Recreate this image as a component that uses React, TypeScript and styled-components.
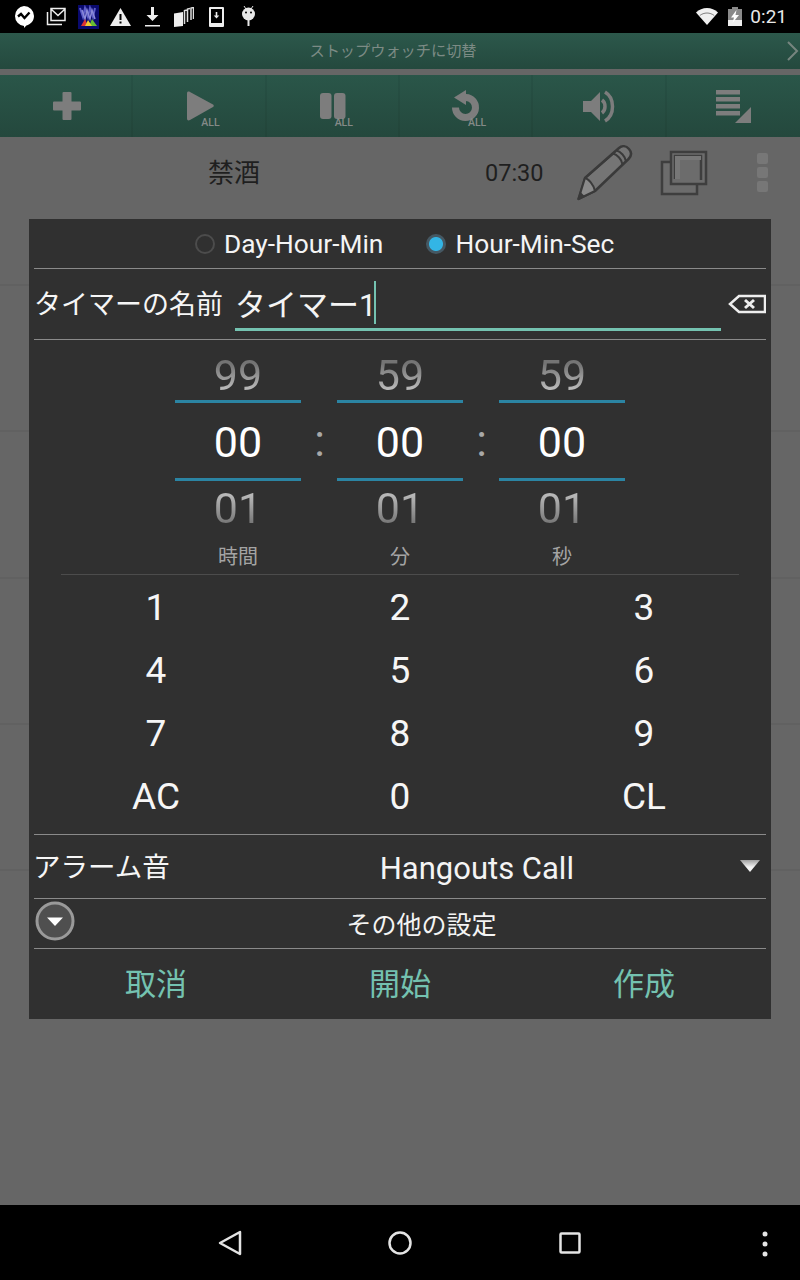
import { Fragment } from "react";
import styled, { createGlobalStyle } from "styled-components";

const GlobalStyle = createGlobalStyle`
  html, body {
    margin: 0;
    padding: 0;
    background: #000;
  }
  * {
    box-sizing: border-box;
  }
`;

const FONT = `Roboto, "Noto Sans CJK JP", sans-serif`;

const Screen = styled.div`
  position: relative;
  width: 800px;
  height: 1280px;
  display: flex;
  flex-direction: column;
  overflow: hidden;
  background: #666;
  font-family: ${FONT};
`;

const StatusBar = styled.div`
  height: 33px;
  flex: none;
  background: #000;
  display: flex;
  align-items: center;
  padding: 0 13px 0 8px;
`;

const StatusSlot = styled.div`
  width: 32px;
  height: 33px;
  display: flex;
  align-items: center;
  justify-content: center;
`;

const StatusRight = styled.div`
  margin-left: auto;
  display: flex;
  align-items: center;
  gap: 10px;
`;

const Clock = styled.span`
  margin-left: -2px;
  color: #e8e8e8;
  font-size: 19px;
  line-height: 33px;
`;

const SwitchBar = styled.div`
  position: relative;
  height: 36px;
  flex: none;
  display: flex;
  align-items: center;
  justify-content: center;
  background: linear-gradient(#2c584b, #24493e);
  color: #7c8b85;
  font-size: 15.2px;
  padding: 0 14px 4px 0;
  margin-bottom: 6px;
`;

const SwitchArrow = styled.svg`
  position: absolute;
  right: 0;
  top: 7px;
`;

const Toolbar = styled.div`
  height: 62px;
  flex: none;
  display: grid;
  grid-template-columns: repeat(6, 1fr);
  background: linear-gradient(#2a5649, #24483d);
`;

const ToolCell = styled.div`
  position: relative;
  display: flex;
  align-items: center;
  justify-content: center;
  box-shadow: inset -2px 0 0 rgba(0, 0, 0, 0.05);
  &:last-child {
    box-shadow: none;
  }
`;

const AllTag = styled.span<{ $left: number }>`
  position: absolute;
  left: ${({ $left }) => $left}px;
  top: 43px;
  color: #858a88;
  font-size: 10.5px;
  font-weight: 500;
  line-height: 10px;
`;

const List = styled.div`
  flex: 1;
  min-height: 0;
`;

const ListRow = styled.div<{ $height: number }>`
  height: ${({ $height }) => $height}px;
  border-bottom: 2px solid #616161;
  display: flex;
  align-items: flex-start;
`;

const RowName = styled.div`
  width: 194px;
  margin-left: 137px;
  height: 72px;
  line-height: 72px;
  text-align: center;
  font-size: 26px;
  color: #1f1f1f;
  flex: none;
`;

const RowTime = styled.div`
  width: 72px;
  margin-left: 154px;
  height: 72px;
  line-height: 72px;
  font-size: 23.5px;
  color: #1f1f1f;
  flex: none;
`;

const RowIcons = styled.div`
  display: flex;
  align-items: center;
  height: 72px;
  margin-left: 20px;
  flex: none;
`;

const CopyWrap = styled.div`
  margin: 0 48px 0 27px;
  display: flex;
`;

const Dialog = styled.div`
  position: absolute;
  left: 29px;
  top: 219px;
  width: 742px;
  height: 800px;
  background: #303030;
  padding: 0 5px;
  display: flex;
  flex-direction: column;
  color: #fff;
`;

const Section = styled.div<{ $height: number }>`
  height: ${({ $height }) => $height}px;
  flex: none;
  border-bottom: 1px solid #8a8a8a;
  display: flex;
  align-items: center;
`;

const RadioRow = styled(Section)`
  padding-left: 161px;
`;

const RadioDot = styled.span<{ $on?: boolean }>`
  width: 20px;
  height: 20px;
  border-radius: 50%;
  flex: none;
  border: ${({ $on }) => ($on ? "0" : "2px solid #4c4c4c")};
  background: ${({ $on }) =>
    $on ? "radial-gradient(circle, #33b5e5 6.5px, #455863 7.5px)" : "transparent"};
`;

const RadioLabel = styled.span<{ $gap: number }>`
  margin-left: 9px;
  margin-right: ${({ $gap }) => $gap}px;
  font-size: 26.3px;
  color: #f4f4f4;
`;

const FieldLabel = styled.span`
  font-size: 27px;
  color: #f6f6f6;
  margin-top: -3px;
`;

const AlarmLabel = styled(FieldLabel)`
  font-size: 27.5px;
  margin: -4px 0 0 -1px;
`;

const NameInput = styled.div`
  width: 486px;
  height: 53px;
  margin-left: 12px;
  border-bottom: 3px solid #74c2b0;
  display: flex;
  align-items: center;
  font-size: 31px;
  color: #f4f4f4;
`;

const Caret = styled.span`
  width: 2px;
  height: 43px;
  background: #74c2b0;
  margin-left: -2px;
`;

const ClearIcon = styled.svg`
  margin-left: 7px;
  flex: none;
`;

const Picker = styled.div`
  height: 234px;
  flex: none;
  display: flex;
  justify-content: center;
  padding-top: 14px;
`;

const PickerDivider = styled.div`
  height: 1px;
  flex: none;
  margin: 0 27px;
  background: #4c4c4c;
`;

const Wheel = styled.div`
  width: 126px;
  display: flex;
  flex-direction: column;
  align-items: stretch;
`;

const WheelFaded = styled.div<{ $direction: "up" | "down"; $height: number; $line: number }>`
  height: ${({ $height }) => $height}px;
  line-height: ${({ $line }) => $line}px;
  text-align: center;
  font-size: 43px;
  color: transparent;
  background: linear-gradient(
    ${({ $direction }) => ($direction === "up" ? "0deg" : "180deg")},
    #b8b8b8 25%,
    #747474 78%
  );
  -webkit-background-clip: text;
  background-clip: text;
`;

const WheelCurrent = styled.div`
  height: 81px;
  line-height: 79px;
  border-top: 3px solid #2b84a3;
  border-bottom: 3px solid #2b84a3;
  text-align: center;
  font-size: 43px;
  color: #fff;
`;

const WheelUnit = styled.div`
  margin-top: 7px;
  text-align: center;
  font-size: 20px;
  line-height: 26px;
  color: #a4a4a4;
`;

const ColonCell = styled.div`
  width: 36px;
  height: 81px;
  margin-top: 46px;
  line-height: 82px;
  text-align: center;
  font-size: 44px;
  color: #a8a8a8;
  padding-left: 1px;
`;

const Keypad = styled.div`
  flex: none;
  display: grid;
  grid-template-columns: repeat(3, 1fr);
  grid-auto-rows: 63px;
  height: 260px;
  padding-top: 1px;
  border-bottom: 1px solid #8a8a8a;
`;

const Key = styled.div`
  display: flex;
  align-items: center;
  justify-content: center;
  font-size: 37px;
  color: #f6f6f6;
`;

const AlarmValue = styled.div`
  flex: 1;
  text-align: center;
  font-size: 31px;
  color: #f4f4f4;
  padding: 3px 0 0 44px;
`;

const AlarmArrow = styled.svg`
  flex: none;
  margin: -2px 6px 0 0;
`;

const MoreLabel = styled.div`
  flex: 1;
  text-align: center;
  font-size: 25px;
  color: #f4f4f4;
  padding-bottom: 2px;
  padding-left: 2px;
`;

const MoreButton = styled.svg`
  flex: none;
  margin-top: -5px;
  margin-left: 1px;
`;

const Actions = styled.div`
  flex: 1;
  display: grid;
  grid-template-columns: repeat(3, 1fr);
  align-items: center;
`;

const ActionButton = styled.div`
  text-align: center;
  font-size: 31px;
  color: #74c2b0;
  padding-bottom: 6px;
`;

const NavBar = styled.div`
  height: 75px;
  flex: none;
  background: #000;
  position: relative;
  display: flex;
  align-items: center;
  justify-content: center;
`;

const NavSlot = styled.div`
  width: 170px;
  display: flex;
  justify-content: center;
`;

const NavMenu = styled.svg`
  position: absolute;
  right: 32px;
  top: 26px;
`;

const ICON = "#7d7d7d";

const BubbleIcon = () => (
  <svg width="22" height="23" viewBox="0 0 22 23">
    <path fill="#fff" d="M11 1a10 10 0 0 1 10 10c0 5-3.500 8.400-7.600 9.500L11 23v-2.100A10 10 0 0 1 11 1z" />
    <path fill="none" stroke="#000" strokeWidth="2.400" d="M5 11.500l3-2.500 3.500 4 5-5.500" />
  </svg>
);

const GalleryMailIcon = () => (
  <svg width="20" height="19" viewBox="0 0 20 19">
    <path fill="none" stroke="#eee" strokeWidth="1.500" d="M5 1.500h14v12H5zM5.500 2.500l6.500 6 6.500-6" />
    <path fill="none" stroke="#eee" strokeWidth="1.500" d="M1.500 5v12.500H16" />
  </svg>
);

const ColorAppIcon = () => (
  <svg width="21" height="24" viewBox="0 0 21 24">
    <rect width="21" height="24" fill="#0a0a6e" />
    <path fill="none" stroke="#5d5dc8" strokeWidth="2" d="M2 3l3 9 2-9 3 9 2-9 3 9 2-9" />
    <path fill="none" stroke="#8a8ad8" strokeWidth="1.500" d="M4 5l3 9 2-9 3 9 2-9 3 9" />
    <path fill="#d33" d="M3 21l4-7 3 7z" />
    <path fill="#6b3" d="M11 21l3-7 5 7z" />
    <path fill="#ec3" d="M7 21l3-6 4 6z" />
  </svg>
);

const WarningIcon = () => (
  <svg width="21" height="18" viewBox="0 0 21 18">
    <path fill="#eee" d="M10.500 0L21 18H0z" />
    <path fill="#000" d="M9.500 6h2v6h-2zM9.500 13.500h2v2h-2z" />
  </svg>
);

const DownloadIcon = () => (
  <svg width="15" height="20" viewBox="0 0 15 20">
    <path fill="#eee" d="M6 0h3v8h4.500l-6 6-6-6H6zM0 18h15v1.500H0z" />
  </svg>
);

const CardsIcon = () => (
  <svg width="20" height="20" viewBox="0 0 20 20">
    <path fill="#eee" d="M0 6.500L9 5v14l-9 1z" />
    <path fill="none" stroke="#ddd" strokeWidth="1.500" d="M10.500 17V3.500l2.500-.500M13.500 15V2l2.500-.500M17 13V1l2.500-.500v11.500" />
  </svg>
);

const PhoneSaveIcon = () => (
  <svg width="15" height="20" viewBox="0 0 15 20">
    <path fill="#eee" fillRule="evenodd" d="M1 0h13a1 1 0 0 1 1 1v18a1 1 0 0 1-1 1H1a1 1 0 0 1-1-1V1a1 1 0 0 1 1-1zM2 2v14h11V2z" />
    <path fill="#eee" d="M6.700 5h1.600v3.500h2L7.500 11.500 4.700 8.500h2z" />
  </svg>
);

const AndroidIcon = () => (
  <svg width="15" height="21" viewBox="0 0 15 21">
    <path stroke="#ddd" strokeWidth="1" d="M3 0l2 3M12 0l-2 3" />
    <circle cx="7.500" cy="8" r="6.500" fill="#e8e8e8" />
    <circle cx="5" cy="6.500" r="1" fill="#000" />
    <circle cx="10" cy="6.500" r="1" fill="#000" />
    <path fill="#e8e8e8" d="M6.500 14h2v6h-2z" />
  </svg>
);

const WifiIcon = () => (
  <svg width="22" height="17" viewBox="0 0 22 17">
    <path fill="#f0f0f0" d="M11 17L0 4.500C3 1.700 6.800 0 11 0s8 1.700 11 4.500z" />
    <path fill="none" stroke="#000" strokeWidth=".8" d="M3.800 7.500C5.800 6 8.300 5 11 5s5.200 1 7.200 2.500" opacity=".6" />
  </svg>
);

const BatteryIcon = () => (
  <svg width="14" height="19" viewBox="0 0 14 19">
    <path fill="#8a8a8a" d="M4 0h6v2h4v17H0V2h4z" />
    <path fill="#eee" d="M0 13h14v6H0z" />
    <path fill="#fff" d="M8.500 3L3 10.500h3L4.500 16 11 8H7.500z" />
  </svg>
);

const PlusIcon = () => (
  <svg width="30" height="30" viewBox="0 0 30 30">
    <path fill={ICON} d="M11.500 1h7a1 1 0 0 1 1 1v8.500H28a1 1 0 0 1 1 1v7a1 1 0 0 1-1 1h-8.500V28a1 1 0 0 1-1 1h-7a1 1 0 0 1-1-1v-8.500H2a1 1 0 0 1-1-1v-7a1 1 0 0 1 1-1h8.500V2a1 1 0 0 1 1-1z" />
  </svg>
);

const PlayIcon = () => (
  <svg width="28" height="30" viewBox="0 0 28 30">
    <path fill={ICON} d="M1 2.500C1 .500 2.500 0 4 1l23 12.500c1 .6 1 2 0 2.600L4 29c-1.500 1-3 .5-3-1.500z" />
  </svg>
);

const PauseIcon = () => (
  <svg width="26" height="26" viewBox="0 0 26 26">
    <rect x="0" y="0" width="11.500" height="26" rx="3" fill={ICON} />
    <rect x="14" y="0" width="11.500" height="26" rx="3" fill={ICON} />
  </svg>
);

const ReloadIcon = () => (
  <svg width="30" height="32" viewBox="0 0 30 32">
    <path fill="none" stroke={ICON} strokeWidth="7" d="M10 7.500h4a10 10 0 1 1-10.500 10" />
    <path fill={ICON} d="M14 0v15L2 7.500z" />
  </svg>
);

const SpeakerIcon = () => (
  <svg width="34" height="33" viewBox="0 0 34 33">
    <path fill={ICON} d="M0 11h8l9-9v29l-9-9H0z" />
    <path fill="none" stroke={ICON} strokeWidth="3.500" d="M19 10c4 3 4 10 0 13" />
    <path fill="none" stroke={ICON} strokeWidth="3.500" d="M22 2c10 6 10 23 0 29" />
  </svg>
);

const QueueIcon = () => (
  <svg width="36" height="33" viewBox="0 0 36 33">
    <path fill={ICON} d="M1 0h24v4.500H1zM1 7h24v4.500H1zM1 14h24v4.500H1zM1 21h24v4.500H1z" />
    <path fill={ICON} d="M36 17v16H20z" />
  </svg>
);

const PencilIcon = () => (
  <svg width="56" height="56" viewBox="0 0 56 56">
    <path fill="#757575" stroke="#3a3a3a" strokeWidth="2.500" strokeLinejoin="round" d="M1.500 54L8 33 42 3c3-2.500 7-2.500 10 1s2.500 7-.500 10L18 46z" />
    <path fill="#8a8a8a" stroke="#3a3a3a" strokeWidth="2" strokeLinejoin="round" d="M1.500 54L8 33c3 .5 9 7 10 13z" />
    <path fill="none" stroke="#3a3a3a" strokeWidth="2" d="M36 8.500c4 1 9 6 9.500 11M39.500 5.500c4 1 9 6 9.500 11M8 33l30-26" />
    <path fill="#3a3a3a" d="M1.500 54l2-7 4.500 4.500z" />
  </svg>
);

const CopyIcon = () => (
  <svg width="48" height="46" viewBox="0 0 48 46">
    <path fill="#6c6c6c" stroke="#3e3e3e" strokeWidth="2.500" d="M2 12h35v32H2z" />
    <path fill="#6c6c6c" stroke="#3e3e3e" strokeWidth="2.500" d="M11 2h35v32H11z" />
    <path fill="none" stroke="#3e3e3e" strokeWidth="2.500" d="M15 29V6h26v24" />
    <path fill="#777" d="M15 6h26v4H20v19h-5z" />
  </svg>
);

const DotsIcon = () => (
  <svg width="14" height="42" viewBox="0 0 14 42">
    <rect x="1" y="1" width="11" height="11" rx="2" fill="#777" />
    <rect x="1" y="15" width="11" height="11" rx="2" fill="#777" />
    <rect x="1" y="29" width="11" height="11" rx="2" fill="#777" />
  </svg>
);

const picker = [
  { top: "99", unit: "時間" },
  { top: "59", unit: "分" },
  { top: "59", unit: "秒" },
];

const keys = ["1", "2", "3", "4", "5", "6", "7", "8", "9", "AC", "0", "CL"];

const App = () => {
  return (
    <Screen>
      <GlobalStyle />
      <StatusBar>
        <StatusSlot><BubbleIcon /></StatusSlot>
        <StatusSlot><GalleryMailIcon /></StatusSlot>
        <StatusSlot><ColorAppIcon /></StatusSlot>
        <StatusSlot><WarningIcon /></StatusSlot>
        <StatusSlot><DownloadIcon /></StatusSlot>
        <StatusSlot><CardsIcon /></StatusSlot>
        <StatusSlot><PhoneSaveIcon /></StatusSlot>
        <StatusSlot><AndroidIcon /></StatusSlot>
        <StatusRight>
          <WifiIcon />
          <BatteryIcon />
          <Clock>0:21</Clock>
        </StatusRight>
      </StatusBar>

      <SwitchBar>
        ストップウォッチに切替
        <SwitchArrow width="14" height="22" viewBox="0 0 14 22">
          <path fill="none" stroke="#76857f" strokeWidth="2" d="M2 2l9 9-9 9" />
        </SwitchArrow>
      </SwitchBar>

      <Toolbar>
        <ToolCell><PlusIcon /></ToolCell>
        <ToolCell><PlayIcon /><AllTag $left={68}>ALL</AllTag></ToolCell>
        <ToolCell><PauseIcon /><AllTag $left={68}>ALL</AllTag></ToolCell>
        <ToolCell><ReloadIcon /><AllTag $left={68}>ALL</AllTag></ToolCell>
        <ToolCell><SpeakerIcon /></ToolCell>
        <ToolCell><QueueIcon /></ToolCell>
      </Toolbar>

      <List>
        <ListRow $height={149}>
          <RowName>禁酒</RowName>
          <RowTime>07:30</RowTime>
          <RowIcons>
            <PencilIcon />
            <CopyWrap><CopyIcon /></CopyWrap>
            <DotsIcon />
          </RowIcons>
        </ListRow>
        <ListRow $height={146} />
        <ListRow $height={147} />
        <ListRow $height={146} />
        <ListRow $height={146} />
      </List>

      <Dialog>
        <RadioRow $height={50}>
          <RadioDot />
          <RadioLabel $gap={43}>Day-Hour-Min</RadioLabel>
          <RadioDot $on />
          <RadioLabel $gap={0}>Hour-Min-Sec</RadioLabel>
        </RadioRow>

        <Section $height={71}>
          <FieldLabel>タイマーの名前</FieldLabel>
          <NameInput>
            タイマー1
            <Caret />
          </NameInput>
          <ClearIcon width="38" height="20" viewBox="0 0 38 20">
            <path fill="none" stroke="#eee" strokeWidth="2.500" d="M37 2H11L2 10l9 8h26z" />
            <path fill="none" stroke="#eee" strokeWidth="3" d="M17 6l9 8M26 6l-9 8" />
          </ClearIcon>
        </Section>

        <Picker>
          {picker.map((wheel, index) => (
            <Fragment key={wheel.unit}>
              {index > 0 && <ColonCell>:</ColonCell>}
              <Wheel>
                <WheelFaded $direction="up" $height={46} $line={42}>{wheel.top}</WheelFaded>
                <WheelCurrent>00</WheelCurrent>
                <WheelFaded $direction="down" $height={56} $line={54}>01</WheelFaded>
                <WheelUnit>{wheel.unit}</WheelUnit>
              </Wheel>
            </Fragment>
          ))}
        </Picker>
        <PickerDivider />

        <Keypad>
          {keys.map((key) => (
            <Key key={key}>{key}</Key>
          ))}
        </Keypad>

        <Section $height={64}>
          <AlarmLabel>アラーム音</AlarmLabel>
          <AlarmValue>Hangouts Call</AlarmValue>
          <AlarmArrow width="20" height="12" viewBox="0 0 20 12">
            <defs>
              <linearGradient id="alarm-arrow" x1="0" y1="0" x2="0" y2="1">
                <stop offset="0" stopColor="#a0a0a0" />
                <stop offset="0.6" stopColor="#f4f4f4" />
              </linearGradient>
            </defs>
            <path fill="url(#alarm-arrow)" d="M0 0h20L10 12z" />
          </AlarmArrow>
        </Section>

        <Section $height={50}>
          <MoreButton width="40" height="40" viewBox="0 0 40 40">
            <circle cx="20" cy="20" r="18" fill="#4f4f4f" stroke="#9a9a9a" strokeWidth="3" />
            <path fill="#fff" d="M12 16.500h16L20 25z" />
          </MoreButton>
          <MoreLabel>その他の設定</MoreLabel>
        </Section>

        <Actions>
          <ActionButton>取消</ActionButton>
          <ActionButton>開始</ActionButton>
          <ActionButton>作成</ActionButton>
        </Actions>
      </Dialog>

      <NavBar>
        <NavSlot>
          <svg width="24" height="26" viewBox="0 0 24 26">
            <path fill="none" stroke="#e4e4e4" strokeWidth="2.500" strokeLinejoin="round" d="M22 2L2 13l20 11z" />
          </svg>
        </NavSlot>
        <NavSlot>
          <svg width="24" height="24" viewBox="0 0 24 24">
            <circle cx="12" cy="12" r="10.500" fill="none" stroke="#e4e4e4" strokeWidth="2.500" />
          </svg>
        </NavSlot>
        <NavSlot>
          <svg width="22" height="22" viewBox="0 0 22 22">
            <rect x="1.500" y="1.500" width="19" height="19" rx="1" fill="none" stroke="#e4e4e4" strokeWidth="2.500" />
          </svg>
        </NavSlot>
        <NavMenu width="6" height="26" viewBox="0 0 6 26">
          <circle cx="3" cy="3" r="2.500" fill="#e4e4e4" />
          <circle cx="3" cy="13" r="2.500" fill="#e4e4e4" />
          <circle cx="3" cy="23" r="2.500" fill="#e4e4e4" />
        </NavMenu>
      </NavBar>
    </Screen>
  );
};

export default App;
